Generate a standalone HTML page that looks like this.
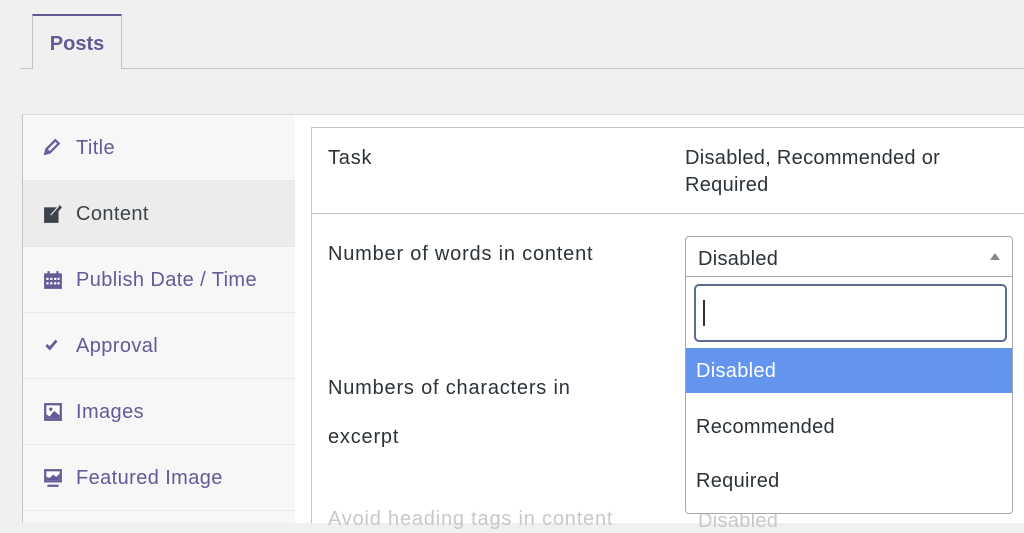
<!DOCTYPE html>
<html><head><style>
*{box-sizing:border-box;margin:0;padding:0}
body{width:1024px;height:523px;overflow:hidden;background:#f0f0f1;font-family:"Liberation Sans",sans-serif;position:relative;color:#2c3338}
.abs{position:absolute}
.tab{left:32px;top:14px;width:90px;height:55px;border:1px solid #c3c4c7;border-top:2px solid #655997;border-bottom:none;background:#f0f0f1;color:#655997;font-weight:bold;font-size:20px;text-align:center;line-height:56px;z-index:2}
.tabline{left:20px;right:0;top:68px;height:1px;background:#c3c4c7}
.panel{left:22px;top:114px;right:0;bottom:0;background:#fff;border-left:1px solid #c3c4c7;border-top:1px solid #dcdcde}
.side{left:23px;top:115px;width:272px;bottom:0;background:#f6f7f7}
.item{position:absolute;left:0;width:272px;height:66px;border-bottom:1px solid #e8e8e8;color:#655997;font-size:20px;letter-spacing:0.4px;line-height:66px;padding-left:53px}
.item svg{position:absolute;left:20px;top:23px}
.sel{background:#ececec;color:#3c434a}
.tbl{left:311px;top:127px;right:0;bottom:0;border-left:1px solid #c3c4c7;border-top:1px solid #c3c4c7}
.t{position:absolute;font-size:20px;letter-spacing:0.8px;color:#2c3338}
.d{letter-spacing:0.3px}
.hline{left:311px;right:0;top:213px;height:1px;background:#c3c4c7}
</style></head><body>
<div class="abs tabline"></div>
<div class="abs tab">Posts</div>
<div class="abs panel"></div>
<div class="abs side">
<div class="item" style="top:0"><svg width="18" height="18" viewBox="0 0 16 16"><path d="M2 14l1-4 8-8 3 3-8 8z M3 10l3 3" fill="none" stroke="#655997" stroke-width="2"/></svg>Title</div>
<div class="item sel" style="top:66px"><svg width="20" height="20" viewBox="0 0 18 18"><rect x="1" y="3" width="13" height="14" fill="#3c434a"/><path d="M9 10l7-8" stroke="#3c434a" stroke-width="3"/><path d="M9 10l7-8" stroke="#ececec" stroke-width="1" transform="translate(-2,0)"/></svg>Content</div>
<div class="item" style="top:132px"><svg width="20" height="20" viewBox="0 0 18 18"><rect x="1" y="3" width="16" height="14" fill="#655997"/><rect x="4" y="1" width="2" height="4" fill="#655997"/><rect x="12" y="1" width="2" height="4" fill="#655997"/><g fill="#fff"><rect x="3" y="7" width="2" height="2"/><rect x="6.5" y="7" width="2" height="2"/><rect x="10" y="7" width="2" height="2"/><rect x="13" y="7" width="2" height="2"/><rect x="3" y="11" width="2" height="2"/><rect x="6.5" y="11" width="2" height="2"/><rect x="10" y="11" width="2" height="2"/><rect x="13" y="11" width="2" height="2"/></g></svg>Publish Date / Time</div>
<div class="item" style="top:198px"><svg width="18" height="18" viewBox="0 0 16 16"><path d="M3 8l3 3 6-7" fill="none" stroke="#655997" stroke-width="2.5"/></svg>Approval</div>
<div class="item" style="top:264px"><svg width="20" height="20" viewBox="0 0 18 18"><rect x="1" y="1" width="16" height="16" fill="#655997"/><rect x="3" y="3" width="12" height="12" fill="#fff"/><path d="M3 15l0-4 3 2 4-5 5 4v3z" fill="#655997"/><circle cx="7" cy="6.5" r="1.5" fill="#655997"/></svg>Images</div>
<div class="item" style="top:330px"><svg width="20" height="20" viewBox="0 0 18 18"><rect x="1" y="1" width="16" height="12" fill="#655997"/><rect x="3" y="3" width="12" height="8" fill="#fff"/><path d="M3 11v-3l3 1 3-3 3 2 3-3v6z" fill="#655997"/><rect x="4" y="15" width="10" height="2" fill="#655997"/></svg>Featured Image</div>
</div>
<div class="abs tbl"></div>
<div class="abs hline"></div>
<div class="t" style="left:328px;top:147px">Task</div>
<div class="t d" style="left:685px;top:145px;line-height:27px">Disabled, Recommended or<br>Required</div>
<div class="t" style="left:328px;top:243px">Number of words in content</div>
<div class="t" style="left:328px;top:364px;line-height:49px">Numbers of characters in<br>excerpt</div>
<div class="t" style="left:328px;top:508px;color:#c8c8c8">Avoid heading tags in content</div>
<div class="t d" style="left:698px;top:510px;color:#c8c8c8">Disabled</div>
<div class="abs" style="left:685px;top:236px;width:328px;height:278px;background:#fff;border:1px solid #a7aaad;border-radius:4px"></div>
<div class="abs" style="left:685px;top:276px;width:328px;height:1px;background:#a7aaad"></div>
<div class="t d" style="left:698px;top:248px;color:#2c3338">Disabled</div>
<div class="abs" style="left:990px;top:253px;width:0;height:0;border-left:5px solid transparent;border-right:5px solid transparent;border-bottom:7px solid #888"></div>
<div class="abs" style="left:694px;top:284px;width:313px;height:58px;border:2px solid #5b6c8f;border-radius:5px;background:#fff"></div>
<div class="abs" style="left:703px;top:300px;width:2px;height:26px;background:#333"></div>
<div class="abs" style="left:686px;top:348px;width:326px;height:45px;background:#6395ef"></div>
<div class="t d" style="left:696px;top:360px;color:#fff">Disabled</div>
<div class="t d" style="left:696px;top:416px">Recommended</div>
<div class="t d" style="left:696px;top:470px">Required</div>
</body></html>
